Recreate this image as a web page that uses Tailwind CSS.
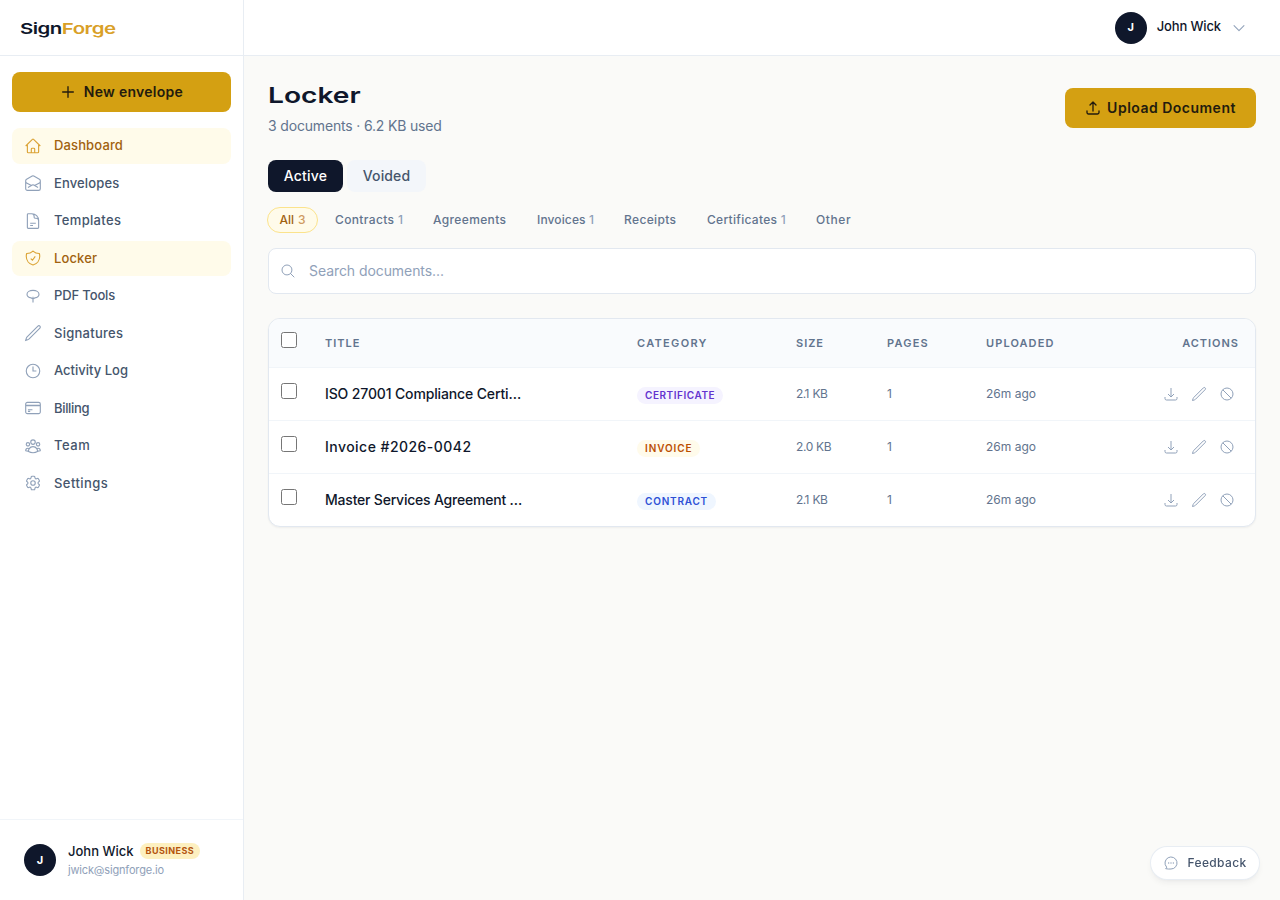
<!DOCTYPE html>
<html lang="en">
  <head>
    <meta charset="UTF-8" />
    <meta name="viewport" content="width=device-width, initial-scale=1.0" />
    <title>Locker - SignForge</title>
    <script src="https://cdn.jsdelivr.net/npm/@tailwindcss/browser@4"></script>
  </head>
  <body class="flex h-screen overflow-hidden bg-[#fafaf8] font-['Inter','Liberation_Sans',sans-serif] text-slate-900">
    <!-- Icons -->
    <svg class="hidden" xmlns="http://www.w3.org/2000/svg">
      <symbol id="home" viewBox="0 0 24 24"><path d="m2.25 12 8.954-8.955c.44-.439 1.152-.439 1.591 0L21.75 12M4.5 9.75v10.125c0 .621.504 1.125 1.125 1.125H9.75v-4.875c0-.621.504-1.125 1.125-1.125h2.25c.621 0 1.125.504 1.125 1.125V21h4.125c.621 0 1.125-.504 1.125-1.125V9.75M8.25 21h8.25" /></symbol>
      <symbol id="envelope" viewBox="0 0 24 24"><path d="M21.75 9v.906a2.25 2.25 0 0 1-1.183 1.981l-6.478 3.488M2.25 9v.906a2.25 2.25 0 0 0 1.183 1.981l6.478 3.488m8.839 2.51-4.66-2.51m0 0-1.023-.55a2.25 2.25 0 0 0-2.134 0l-1.022.55m0 0-4.661 2.51m16.5 1.615a2.25 2.25 0 0 1-2.25 2.25h-15a2.25 2.25 0 0 1-2.25-2.25V8.844a2.25 2.25 0 0 1 1.183-1.981l7.5-4.039a2.25 2.25 0 0 1 2.134 0l7.5 4.039a2.25 2.25 0 0 1 1.183 1.98V19.5Z" /></symbol>
      <symbol id="document" viewBox="0 0 24 24"><path d="M19.5 14.25v-2.625a3.375 3.375 0 0 0-3.375-3.375h-1.5A1.125 1.125 0 0 1 13.5 7.125v-1.5a3.375 3.375 0 0 0-3.375-3.375H8.25m0 12.75h7.5m-7.5 3H12M10.5 2.25H5.625c-.621 0-1.125.504-1.125 1.125v17.25c0 .621.504 1.125 1.125 1.125h12.75c.621 0 1.125-.504 1.125-1.125V11.25a9 9 0 0 0-9-9Z" /></symbol>
      <symbol id="shield" viewBox="0 0 24 24"><path d="M9 12.75 11.25 15 15 9.75m-3-7.036A11.959 11.959 0 0 1 3.598 6 11.99 11.99 0 0 0 3 9.749c0 5.592 3.824 10.29 9 11.623 5.176-1.332 9-6.03 9-11.622 0-1.31-.21-2.571-.598-3.751h-.152c-3.196 0-6.1-1.248-8.25-3.285Z" /></symbol>
      <symbol id="tools" viewBox="0 0 24 24"><path d="M9.5 14.5C6.300 14 4 12.100 4 9.500c0-3 3.600-5 8-5s8 2 8 5c0 2.600-2.300 4.500-5.500 5L12 16.500 9.500 14.500ZM12 13V20.500" /></symbol>
      <symbol id="pencil" viewBox="0 0 24 24"><path d="m16.862 4.487 1.687-1.688a1.875 1.875 0 1 1 2.652 2.652L6.832 19.82a4.5 4.5 0 0 1-1.897 1.13l-2.685.8.8-2.685a4.5 4.5 0 0 1 1.13-1.897L16.863 4.487Z" /></symbol>
      <symbol id="clock" viewBox="0 0 24 24"><path d="M12 6v6h4.5m4.5 0a9 9 0 1 1-18 0 9 9 0 0 1 18 0Z" /></symbol>
      <symbol id="card" viewBox="0 0 24 24"><path d="M2.25 8.25h19.5M2.25 9h19.5m-16.5 5.25h6m-6 2.25h3m-3.75 3h15a2.25 2.25 0 0 0 2.25-2.25V6.75A2.25 2.25 0 0 0 19.5 4.5h-15a2.25 2.25 0 0 0-2.25 2.25v10.5A2.25 2.25 0 0 0 4.5 19.5Z" /></symbol>
      <symbol id="team" viewBox="0 0 24 24"><path d="M18 18.72a9.094 9.094 0 0 0 3.741-.479 3 3 0 0 0-4.682-2.72m.94 3.198.001.031c0 .225-.012.447-.037.666A11.944 11.944 0 0 1 12 21c-2.17 0-4.207-.576-5.963-1.584A6.062 6.062 0 0 1 6 18.719m12 0a5.971 5.971 0 0 0-.941-3.197m0 0A5.995 5.995 0 0 0 12 12.75a5.995 5.995 0 0 0-5.058 2.772m0 0a3 3 0 0 0-4.681 2.72 8.986 8.986 0 0 0 3.74.477m.94-3.197a5.971 5.971 0 0 0-.94 3.197M15 6.75a3 3 0 1 1-6 0 3 3 0 0 1 6 0Zm6 3a2.25 2.25 0 1 1-4.5 0 2.25 2.25 0 0 1 4.5 0Zm-13.5 0a2.25 2.25 0 1 1-4.5 0 2.25 2.25 0 0 1 4.5 0Z" /></symbol>
      <symbol id="cog" viewBox="0 0 24 24"><path d="M9.594 3.94c.09-.542.56-.94 1.11-.94h2.593c.55 0 1.02.398 1.11.94l.213 1.281c.063.374.313.686.645.87.074.04.147.083.22.127.325.196.72.257 1.075.124l1.217-.456a1.125 1.125 0 0 1 1.37.49l1.296 2.247a1.125 1.125 0 0 1-.26 1.431l-1.003.827c-.293.241-.438.613-.43.992a7.723 7.723 0 0 1 0 .255c-.008.378.137.75.43.991l1.004.827c.424.35.534.955.26 1.43l-1.298 2.247a1.125 1.125 0 0 1-1.369.491l-1.217-.456c-.355-.133-.75-.072-1.076.124a6.47 6.47 0 0 1-.22.128c-.331.183-.581.495-.644.869l-.213 1.281c-.09.543-.56.94-1.11.94h-2.594c-.55 0-1.019-.398-1.11-.94l-.213-1.281c-.062-.374-.312-.686-.644-.87a6.52 6.52 0 0 1-.22-.127c-.325-.196-.72-.257-1.076-.124l-1.217.456a1.125 1.125 0 0 1-1.369-.49l-1.297-2.247a1.125 1.125 0 0 1 .26-1.431l1.004-.827c.292-.24.437-.613.43-.991a6.932 6.932 0 0 1 0-.255c.007-.38-.138-.751-.43-.992l-1.004-.827a1.125 1.125 0 0 1-.26-1.43l1.297-2.247a1.125 1.125 0 0 1 1.37-.491l1.216.456c.356.133.751.072 1.076-.124.072-.044.146-.086.22-.128.332-.183.582-.495.644-.869l.214-1.28Z" /><path d="M15 12a3 3 0 1 1-6 0 3 3 0 0 1 6 0Z" /></symbol>
      <symbol id="download" viewBox="0 0 24 24"><path d="M3 16.5v2.25A2.25 2.25 0 0 0 5.25 21h13.5A2.25 2.25 0 0 0 21 18.75V16.5M16.5 12 12 16.5m0 0L7.5 12m4.5 4.5V3" /></symbol>
      <symbol id="void" viewBox="0 0 24 24"><path d="M21 12a9 9 0 1 1-18 0 9 9 0 0 1 18 0ZM5.636 5.636l12.728 12.728" /></symbol>
    </svg>

    <!-- Sidebar -->
    <aside class="flex w-[244px] shrink-0 flex-col border-r border-slate-200/80 bg-white">
      <div class="flex h-14 shrink-0 items-center border-b border-slate-200/80 px-5 pt-[3px]">
        <span class="origin-left scale-x-[1.36] text-[15px] font-semibold tracking-tight whitespace-nowrap">Sign<span class="text-[#d9a027]">Forge</span></span>
      </div>

      <div class="px-3 pt-4">
        <button class="flex h-10 w-full items-center justify-center gap-2 rounded-lg bg-[#d4a012] text-sm font-semibold tracking-[0.02em] text-[#231b0e]">
          <svg class="size-4 fill-none stroke-current stroke-2" viewBox="0 0 24 24"><path stroke-linecap="round" d="M12 4v16M4 12h16" /></svg>
          New envelope
        </button>
      </div>

      <nav class="flex flex-1 flex-col gap-0.5 px-3 pt-4 text-[13px] leading-[19.5px] font-medium tracking-[0.01em] text-slate-600">
        <a class="flex items-center gap-3 rounded-lg bg-[#fffbea] px-3 py-2 text-[#a1620f]">
          <svg class="size-[18px] fill-none stroke-[#dba335] stroke-[1.5]"><use href="#home" /></svg>Dashboard
        </a>
        <a class="flex items-center gap-3 rounded-lg px-3 py-2">
          <svg class="size-[18px] fill-none stroke-slate-400 stroke-[1.5]"><use href="#envelope" /></svg>Envelopes
        </a>
        <a class="flex items-center gap-3 rounded-lg px-3 py-2 tracking-wide">
          <svg class="size-[18px] fill-none stroke-slate-400 stroke-[1.5]"><use href="#document" /></svg>Templates
        </a>
        <a class="flex items-center gap-3 rounded-lg bg-[#fffbea] px-3 py-2 text-[#a1620f]">
          <svg class="size-[18px] fill-none stroke-[#dba335] stroke-[1.5]"><use href="#shield" /></svg>Locker
        </a>
        <a class="flex items-center gap-3 rounded-lg px-3 py-2 tracking-[-0.01em]">
          <svg class="size-[18px] fill-none stroke-slate-400 stroke-[1.5]"><use href="#tools" /></svg>PDF Tools
        </a>
        <a class="flex items-center gap-3 rounded-lg px-3 py-2 tracking-[0.02em]">
          <svg class="size-[18px] fill-none stroke-slate-400 stroke-[1.5]"><use href="#pencil" /></svg>Signatures
        </a>
        <a class="flex items-center gap-3 rounded-lg px-3 py-2 tracking-normal">
          <svg class="size-[18px] fill-none stroke-slate-400 stroke-[1.5]"><use href="#clock" /></svg>Activity Log
        </a>
        <a class="flex items-center gap-3 rounded-lg px-3 py-2 tracking-tight">
          <svg class="size-[18px] fill-none stroke-slate-400 stroke-[1.5]"><use href="#card" /></svg>Billing
        </a>
        <a class="flex items-center gap-3 rounded-lg px-3 py-2 tracking-[0.04em]">
          <svg class="size-[18px] fill-none stroke-slate-400 stroke-[1.5]"><use href="#team" /></svg>Team
        </a>
        <a class="flex items-center gap-3 rounded-lg px-3 py-2 tracking-[0.035em]">
          <svg class="size-[18px] fill-none stroke-slate-400 stroke-[1.5]"><use href="#cog" /></svg>Settings
        </a>
      </nav>

      <div class="flex h-[81px] shrink-0 items-center gap-3 border-t border-slate-100 px-6">
        <div class="flex size-8 items-center justify-center rounded-full bg-slate-900 text-[11px] font-bold text-white">J</div>
        <div>
          <div class="flex items-center gap-1.5">
            <span class="text-[13px] leading-[19px] font-medium">John Wick</span>
            <span class="rounded-full bg-[#fdf0c0] px-1.5 text-[9px] leading-4 font-bold tracking-[0.05em] text-[#b4540f]">BUSINESS</span>
          </div>
          <p class="pt-px text-[11px] leading-[17px] tracking-[-0.015em] text-slate-400">jwick@signforge.io</p>
        </div>
      </div>
    </aside>

    <div class="flex min-w-0 flex-1 flex-col">
      <!-- Top bar -->
      <header class="flex h-14 shrink-0 items-center justify-end border-b border-slate-200/80 bg-white pr-[34px]">
        <div class="flex size-8 items-center justify-center rounded-full bg-slate-900 text-[11px] font-bold text-white">J</div>
        <span class="ml-2.5 pb-0.5 text-[13px] font-medium tracking-[-0.01em]">John Wick</span>
        <svg class="ml-[11px] size-3.5 fill-none stroke-slate-400 stroke-[1.8]" viewBox="0 0 24 24"><path stroke-linecap="round" stroke-linejoin="round" d="m3.500 8 8.500 8.500L20.500 8" /></svg>
      </header>

      <main class="flex-1 px-6 pt-6">
        <div class="flex items-center justify-between">
          <div>
            <h1 class="-mt-px w-fit origin-left scale-x-[1.28] text-[22px] leading-8 font-semibold">Locker</h1>
            <p class="mt-[5px] text-sm tracking-[-0.012em] text-slate-500">3 documents · 6.2 KB used</p>
          </div>
          <button class="flex h-10 w-[191px] items-center justify-center gap-1.5 rounded-lg bg-[#d4a012] text-sm font-semibold tracking-[0.035em] whitespace-nowrap text-[#231b0e]">
            <svg class="size-4 fill-none stroke-current stroke-2" viewBox="0 0 24 24"><path stroke-linecap="round" stroke-linejoin="round" d="M3 16.5v2.25A2.25 2.25 0 0 0 5.250 21h13.500A2.25 2.25 0 0 0 21 18.750V16.500m-13.500-9L12 3m0 0 4.500 4.500M12 3v13.500" /></svg>
            Upload Document
          </button>
        </div>

        <div class="mt-6 flex gap-1 text-sm font-medium">
          <button class="h-8 w-[75px] rounded-lg bg-slate-900 tracking-[0.015em] text-white">Active</button>
          <button class="h-8 w-[79px] rounded-lg bg-[#f3f6fa] tracking-[0.01em] text-slate-600">Voided</button>
        </div>

        <!-- Category filters -->
        <div class="mt-[15px] -ml-px flex h-[26px] items-center gap-1 text-xs font-medium tracking-[0.03em] whitespace-nowrap text-slate-500">
          <span class="mr-px flex h-[26px] w-[51px] items-center justify-center gap-1 rounded-full border border-[#fbe38c] bg-[#fffbea] tracking-normal text-[#a1620f]">All <span class="text-[#cf9b62]">3</span></span>
          <span class="w-[94px] px-3">Contracts <span class="text-slate-400">1</span></span>
          <span class="w-[100px] px-3">Agreements</span>
          <span class="w-[83px] px-3 tracking-[0.01em]">Invoices <span class="text-slate-400">1</span></span>
          <span class="w-[79px] px-3">Receipts</span>
          <span class="w-[105px] px-3 tracking-wide">Certificates <span class="text-slate-400">1</span></span>
          <span class="px-3 tracking-wider">Other</span>
        </div>

        <div class="mt-[15px] flex h-[46px] items-center gap-[13px] rounded-lg border border-slate-200 bg-white pr-3 pl-[11px]">
          <svg class="size-4 fill-none stroke-slate-400 stroke-[1.5]" viewBox="0 0 24 24"><path stroke-linecap="round" d="m21 21-5.197-5.197m0 0A7.500 7.500 0 1 0 5.196 5.196a7.500 7.500 0 0 0 10.607 10.607Z" /></svg>
          <input type="text" placeholder="Search documents..." class="flex-1 text-sm tracking-[-0.005em] outline-none placeholder:text-slate-400" />
        </div>

        <!-- Documents -->
        <div class="mt-6 overflow-hidden rounded-xl border border-slate-200 bg-white shadow-xs">
          <table class="w-full table-fixed text-left">
            <thead>
              <tr class="h-12 bg-[#f9fbfd] text-[11px] tracking-[0.09em] text-slate-500">
                <th class="w-10 pl-3"><input type="checkbox" class="-mt-1.5 block size-4" /></th>
                <th class="w-[312px] px-4 font-semibold">TITLE</th>
                <th class="w-[159px] px-4 font-semibold tracking-[0.12em]">CATEGORY</th>
                <th class="w-[91px] px-4 font-semibold">SIZE</th>
                <th class="w-[99px] px-4 font-semibold tracking-[0.11em]">PAGES</th>
                <th class="px-4 font-semibold tracking-[0.1em]">UPLOADED</th>
                <th class="px-4 text-right font-semibold">ACTIONS</th>
              </tr>
            </thead>
            <tbody class="text-xs text-slate-500">
              <tr class="h-[53px] border-t border-slate-100">
                <td class="pl-3"><input type="checkbox" class="-mt-1.5 block size-4" /></td>
                <td class="px-4 text-sm font-medium tracking-[-0.01em] whitespace-nowrap text-slate-900">ISO 27001 Compliance Certi…</td>
                <td class="px-4"><span class="mt-1 inline-block rounded-full bg-violet-50 px-2 align-middle text-[10px] leading-[17px] font-semibold tracking-[0.055em] text-[#6433cf]">CERTIFICATE</span></td>
                <td class="px-4 tracking-[-0.05em] [word-spacing:1px]">2.1 KB</td>
                <td class="px-4">1</td>
                <td class="px-4">26m ago</td>
                <td class="pr-5">
                  <div class="flex justify-end gap-3 fill-none stroke-slate-400 stroke-[1.5]">
                    <svg class="size-4"><use href="#download" /></svg>
                    <svg class="size-4"><use href="#pencil" /></svg>
                    <svg class="size-4"><use href="#void" /></svg>
                  </div>
                </td>
              </tr>
              <tr class="h-[53px] border-t border-slate-100">
                <td class="pl-3"><input type="checkbox" class="-mt-1.5 block size-4" /></td>
                <td class="px-4 text-sm font-medium tracking-[0.033em] whitespace-nowrap text-slate-900">Invoice #2026-0042</td>
                <td class="px-4"><span class="mt-1 inline-block rounded-full bg-amber-50 px-2 align-middle text-[10px] leading-[17px] font-semibold tracking-[0.09em] text-amber-700">INVOICE</span></td>
                <td class="px-4 tracking-[-0.03em]">2.0 KB</td>
                <td class="px-4">1</td>
                <td class="px-4">26m ago</td>
                <td class="pr-5">
                  <div class="flex justify-end gap-3 fill-none stroke-slate-400 stroke-[1.5]">
                    <svg class="size-4"><use href="#download" /></svg>
                    <svg class="size-4"><use href="#pencil" /></svg>
                    <svg class="size-4"><use href="#void" /></svg>
                  </div>
                </td>
              </tr>
              <tr class="h-[53px] border-t border-slate-100">
                <td class="pl-3"><input type="checkbox" class="-mt-1.5 block size-4" /></td>
                <td class="px-4 text-sm font-medium tracking-[-0.015em] whitespace-nowrap text-slate-900">Master Services Agreement …</td>
                <td class="px-4"><span class="mt-1 inline-block rounded-full bg-blue-50 px-2 align-middle text-[10px] leading-[17px] font-semibold tracking-[0.08em] text-[#2d50d6]">CONTRACT</span></td>
                <td class="px-4 tracking-[-0.05em] [word-spacing:1px]">2.1 KB</td>
                <td class="px-4">1</td>
                <td class="px-4">26m ago</td>
                <td class="pr-5">
                  <div class="flex justify-end gap-3 fill-none stroke-slate-400 stroke-[1.5]">
                    <svg class="size-4"><use href="#download" /></svg>
                    <svg class="size-4"><use href="#pencil" /></svg>
                    <svg class="size-4"><use href="#void" /></svg>
                  </div>
                </td>
              </tr>
            </tbody>
          </table>
        </div>
      </main>
    </div>

    <!-- Feedback -->
    <button class="fixed right-5 bottom-5 flex h-[34px] w-[110px] items-center justify-center gap-2 rounded-full border border-slate-200/80 bg-white text-xs font-medium tracking-[0.03em] text-slate-600 shadow-md shadow-slate-900/5">
      <svg class="size-4 fill-none stroke-slate-400 stroke-[1.5]" viewBox="0 0 24 24"><path stroke-linejoin="round" d="M4 20.500c1-.8 1.500-1.500 1.400-2.400A9 9 0 1 1 12 21c-3 0-5 .3-8-.5Z" /><path stroke-linecap="round" stroke-width="2" d="M8.500 12h.01M12 12h.01M15.500 12h.01" /></svg>
      Feedback
    </button>
  </body>
</html>
